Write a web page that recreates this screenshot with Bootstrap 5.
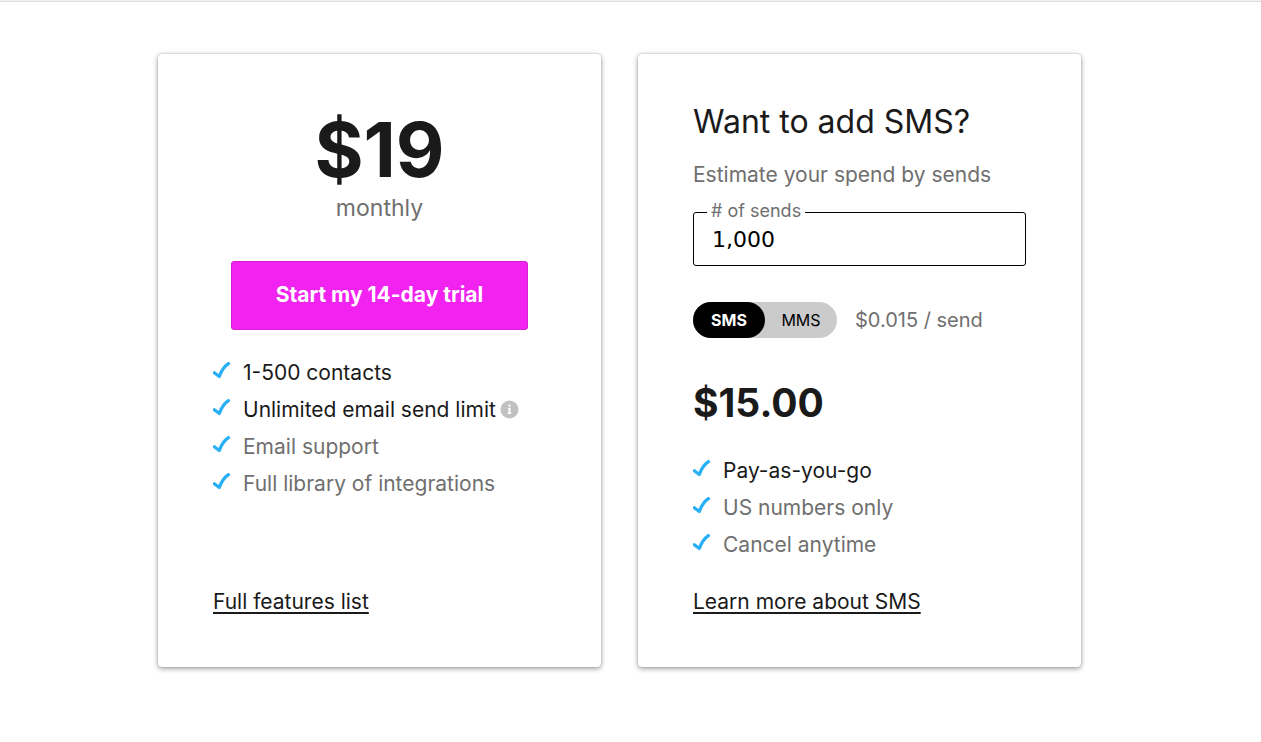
<!DOCTYPE html>
<html lang="en">
<head>
<meta charset="utf-8">
<meta name="viewport" content="width=device-width, initial-scale=1">
<title>Pricing</title>
<link href="https://cdn.jsdelivr.net/npm/bootstrap@5.3.0/dist/css/bootstrap.min.css" rel="stylesheet">
<style>
  body { font-family: Inter, "Open Sans", sans-serif; font-size: 21px; line-height: 30px; color: #1a1a1a; background: #fff; padding-right: 22px; }
  .top-rule { height: 2px; margin-right: -22px; background: #f0f0f0; border-bottom: 1px solid #dedede; }
  .plans { max-width: 923px; padding-top: 52px; padding-bottom: 74px; gap: 37px; }
  .plan { flex: 1 1 0; padding: 50px 55px; border-radius: 4px; background: #fff; box-shadow: 0 0 2px rgba(0,0,0,.25), 0 2px 5px rgba(0,0,0,.3), 0 0 9px rgba(0,0,0,.07); }
  .quiet { color: #6f6f6f; }
  .headline-price { font-size: 75px; line-height: 80px; margin-top: 6px; }
  .period { font-size: 23px; line-height: 28px; margin-top: 4px; }
  .btn-trial { --bs-btn-color: #fff; --bs-btn-bg: #f222f0; --bs-btn-border-color: #d31ed1; --bs-btn-hover-color: #fff; --bs-btn-hover-bg: #d91ed7; --bs-btn-border-radius: 3px; font-size: 21px; line-height: 30px; font-weight: 700; padding: 18px 0 19px; margin: 39px 18px 0; }
  .checks li { line-height: 37px; gap: 13px; }
  .checks svg.tick { width: 17px; height: 17px; margin-bottom: 4px; }
  .with-info { gap: 4px; }
  .plan-title { font-size: 32px; line-height: 36px; }
  .estimate { margin-top: 20px; }
  .sends { margin-top: 22px; }
  .sends label { left: 14px; top: -11px; padding: 0 4px; font-size: 18px; line-height: 20px; background: #fff; }
  .sends input { height: 54px; font-family: "DejaVu Sans", sans-serif; font-size: 22px; color: #000; border: 1px solid #000; border-radius: 3px; padding: 0 18px; }
  .message-type { gap: 18px; margin-top: 36px; font-size: 20px; }
  .switch-track { background: #cbcbcb; border-radius: 18px; }
  .switch-track label { width: 72px; font-size: 16px; line-height: 36px; color: #000; border-radius: 18px; cursor: pointer; }
  .switch-track input:checked + label { background: #000; color: #fff; font-weight: 700; }
  .total { font-size: 39px; line-height: 48px; margin-top: 41px; margin-bottom: 25px; }
  .more { color: #1a1a1a; text-decoration-thickness: 2px; text-underline-offset: 3px; }
</style>
</head>
<body>
<div class="top-rule"></div>
<main class="plans mx-auto d-flex">
  <section class="plan d-flex flex-column">
    <h1 class="headline-price fw-bold text-center mb-0">$19</h1>
    <p class="period quiet text-center mb-0">monthly</p>
    <button type="button" class="btn btn-trial">Start my 14-day trial</button>
    <ul class="checks list-unstyled mb-0 mt-4">
      <li class="d-flex align-items-center"><svg class="tick" viewBox="0 0 17 17" aria-hidden="true"><use href="#tick"/></svg>1-500 contacts</li>
      <li class="d-flex align-items-center"><svg class="tick" viewBox="0 0 17 17" aria-hidden="true"><use href="#tick"/></svg><span class="with-info d-flex align-items-center">Unlimited email send limit
        <svg width="19" height="19" viewBox="0 0 19 19" role="img" aria-label="Info"><circle cx="9.500" cy="9.500" r="9" fill="#c1c1c1"/><path d="M8.500 4.500h2v2h-2zM8 7.800h2.500V12.500h.8v1.500H7.700V12.500h.8V9.200H8z" fill="#fff"/></svg></span></li>
      <li class="d-flex align-items-center quiet"><svg class="tick" viewBox="0 0 17 17" aria-hidden="true"><use href="#tick"/></svg>Email support</li>
      <li class="d-flex align-items-center quiet"><svg class="tick" viewBox="0 0 17 17" aria-hidden="true"><use href="#tick"/></svg>Full library of integrations</li>
    </ul>
    <a href="#features" class="more mt-auto align-self-start">Full features list</a>
  </section>

  <section class="plan d-flex flex-column">
    <h2 class="plan-title fw-normal mb-0">Want to add SMS?</h2>
    <p class="estimate quiet mb-0">Estimate your spend by sends</p>
    <div class="sends position-relative">
      <input id="sends" type="text" inputmode="numeric" class="form-control shadow-none" value="1,000">
      <label for="sends" class="position-absolute quiet">#&nbsp;of sends</label>
    </div>
    <div class="message-type d-flex align-items-center">
      <div class="switch-track d-flex" role="group" aria-label="Message type">
        <input class="btn-check" type="radio" name="kind" id="sms" checked><label for="sms" class="text-center">SMS</label>
        <input class="btn-check" type="radio" name="kind" id="mms"><label for="mms" class="text-center">MMS</label>
      </div>
      <span class="quiet">$0.015 / send</span>
    </div>
    <p class="total fw-bold">$15.00</p>
    <ul class="checks list-unstyled mb-4">
      <li class="d-flex align-items-center"><svg class="tick" viewBox="0 0 17 17" aria-hidden="true"><use href="#tick"/></svg>Pay-as-you-go</li>
      <li class="d-flex align-items-center quiet"><svg class="tick" viewBox="0 0 17 17" aria-hidden="true"><use href="#tick"/></svg>US numbers only</li>
      <li class="d-flex align-items-center quiet"><svg class="tick" viewBox="0 0 17 17" aria-hidden="true"><use href="#tick"/></svg>Cancel anytime</li>
    </ul>
    <a href="#sms-info" class="more align-self-start">Learn more about SMS</a>
  </section>
</main>
<svg class="d-none"><symbol id="tick" viewBox="0 0 17 17"><path d="M1.300 10.700 6.300 14.500C8.300 9 11.500 4.200 15.400 1.600" fill="none" stroke="#29aff5" stroke-width="3.200" stroke-linecap="round" stroke-linejoin="round"/></symbol></svg>
<script src="https://cdn.jsdelivr.net/npm/bootstrap@5.3.0/dist/js/bootstrap.bundle.min.js"></script>
</body>
</html>
